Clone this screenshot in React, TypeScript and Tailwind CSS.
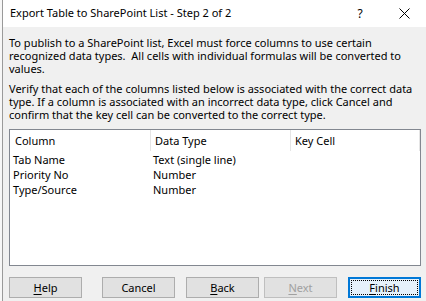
import React from 'react';

const font = { fontFamily: '"Noto Sans", "Open Sans", sans-serif' };

interface ButtonProps {
  label: string;
  mnemonic?: number;
  width: string;
  disabled?: boolean;
  focused?: boolean;
}

const DialogButton: React.FC<ButtonProps> = ({ label, mnemonic, width, disabled = false, focused = false }) => {
  const parts =
    mnemonic === undefined ? (
      label
    ) : (
      <>
        {label.slice(0, mnemonic)}
        <span className="underline underline-offset-2">{label[mnemonic]}</span>
        {label.slice(mnemonic + 1)}
      </>
    );

  if (focused) {
    return (
      <div className={`${width} h-[21px] border-2 border-[#0078d7] bg-[#e5f1fb] p-[1px]`}>
        <div className="h-full border border-dotted border-black flex items-center justify-center text-[11px] text-black">
          {parts}
        </div>
      </div>
    );
  }

  return (
    <div
      className={`${width} h-[21px] border flex items-center justify-center text-[11px] ${
        disabled ? 'border-[#bfbfbf] bg-[#e1e1e1] text-[#a0a0a0]' : 'border-[#adadad] bg-[#e1e1e1] text-black'
      }`}
    >
      {parts}
    </div>
  );
};

const rows = [
  { column: 'Tab Name', type: 'Text (single line)' },
  { column: 'Priority No', type: 'Number' },
  { column: 'Type/Source', type: 'Number' },
];

export default function App() {
  return (
    <div className="w-[426px] h-[301px] flex overflow-hidden bg-white" style={font}>
      {/* sheet behind the dialog */}
      <div className="w-[2px] h-full bg-[#f7f7f7]" />
      <div className="w-[1px] h-full bg-[#9a9a9a]" />

      <div className="flex-1 min-w-0 flex flex-col overflow-hidden">
        {/* title bar */}
        <div className="h-[27px] shrink-0 bg-white flex items-center pl-[7px] text-[11px] text-black">
          <span className="flex-1">Export Table to SharePoint List - Step 2 of 2</span>
          <span className="w-[14px] text-center mr-[32px] text-[12px]">?</span>
          <svg className="mr-[16px]" width="11" height="11" viewBox="0 0 11 11">
            <path d="M0.5 0.5 L10.5 10.5 M10.5 0.5 L0.5 10.5" stroke="#000" strokeWidth="1" />
          </svg>
        </div>

        {/* body */}
        <div className="flex-1 bg-[#f0f0f0] flex flex-col pl-[6px] pr-[5px] pt-[9px] text-[11px] leading-[13px] text-black">
          <p className="whitespace-nowrap">
            To publish to a SharePoint list, Excel must force columns to use certain
            <br />
            recognized data types.&nbsp; All cells with individual formulas will be converted to
            <br />
            values.
          </p>
          <p className="whitespace-nowrap mt-[7px]">
            Verify that each of the columns listed below is associated with the correct data
            <br />
            type. If a column is associated with an incorrect data type, click Cancel and
            <br />
            confirm that the key cell can be converted to the correct type.
          </p>

          {/* list */}
          <div className="mt-[8px] h-[137px] border border-[#828790] bg-white flex flex-col">
            <div className="h-[21px] flex">
              <div className="w-[141px] border-r border-[#e5e5e5] pl-[5px] flex items-center">Column</div>
              <div className="w-[140px] border-r border-[#e5e5e5] pl-[4px] flex items-center">Data Type</div>
              <div className="w-[129px] border-r border-[#e5e5e5] pl-[4px] flex items-center">Key Cell</div>
            </div>
            <div className="flex flex-col pt-[1px]">
              {rows.map((r) => (
                <div key={r.column} className="h-[15px] flex items-center">
                  <div className="w-[143px] pl-[3px]">{r.column}</div>
                  <div>{r.type}</div>
                </div>
              ))}
            </div>
          </div>

          {/* buttons */}
          <div className="mt-[11px] flex">
            <DialogButton label="Help" mnemonic={0} width="w-[73px]" />
            <div className="ml-[20px]">
              <DialogButton label="Cancel" width="w-[73px]" />
            </div>
            <div className="ml-[11px]">
              <DialogButton label="Back" mnemonic={0} width="w-[73px]" />
            </div>
            <div className="ml-[5px]">
              <DialogButton label="Next" mnemonic={0} width="w-[73px]" disabled />
            </div>
            <div className="ml-[11px]">
              <DialogButton label="Finish" mnemonic={0} width="w-[73px]" focused />
            </div>
          </div>
        </div>
      </div>
    </div>
  );
}
